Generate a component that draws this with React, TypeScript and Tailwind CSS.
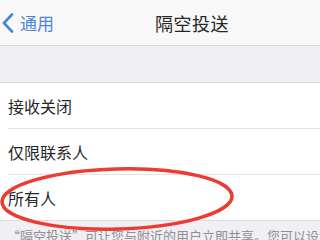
export default function App() {
  const rows = ["接收关闭", "仅限联系人", "所有人"];
  const font = { fontFamily: '"PingFang SC", "Noto Sans CJK SC", sans-serif' };

  return (
    <div className="relative w-[320px] h-[240px] overflow-hidden bg-[#efeff4]" style={font}>
      {/* 导航栏 */}
      <div className="h-[46px] bg-[#f8f8f8] border-b border-[#d6d6da] flex items-center">
        <div className="w-[155px] flex items-center text-[#4a86d4]">
          <svg width="12" height="20" viewBox="0 0 12 20" className="ml-[2px]">
            <path d="M10 1.5 L2 10 L10 18.5" fill="none" stroke="#4a86d4" strokeWidth="2.6" strokeLinecap="round" strokeLinejoin="round" />
          </svg>
          <span className="ml-[6px] text-[17px] leading-none">通用</span>
        </div>
        <h1 className="text-[18px] leading-none text-[#262626] tracking-[0.5px]">隔空投送</h1>
      </div>

      <div className="h-[37px] border-b border-[#d9d9dd]" />

      {/* 选项 */}
      <div className="bg-white">
        {rows.map((r, i) => (
          <div key={r}>
            <div className="h-[45px] flex items-center pl-[8px] text-[16px] text-[#262626]">{r}</div>
            {i < rows.length - 1 && <div className="ml-[8px] h-px bg-[#e2e2e6]" />}
          </div>
        ))}
      </div>
      <div className="h-px bg-[#dcdce0]" />

      <p className="pl-[7px] pt-[8px] text-[13px] leading-none text-[#8e8e93] whitespace-nowrap">
        “隔空投送”可让您与附近的用户立即共享。您可以设置
      </p>

      {/* 红色圈 */}
      <svg className="absolute left-0 top-0 pointer-events-none" width="320" height="240" viewBox="0 0 320 240">
        <ellipse cx="117" cy="199" rx="115" ry="30" transform="rotate(-1.5 117 199)" fill="none" stroke="#ec3b32" strokeWidth="3.5" />
      </svg>
    </div>
  );
}
